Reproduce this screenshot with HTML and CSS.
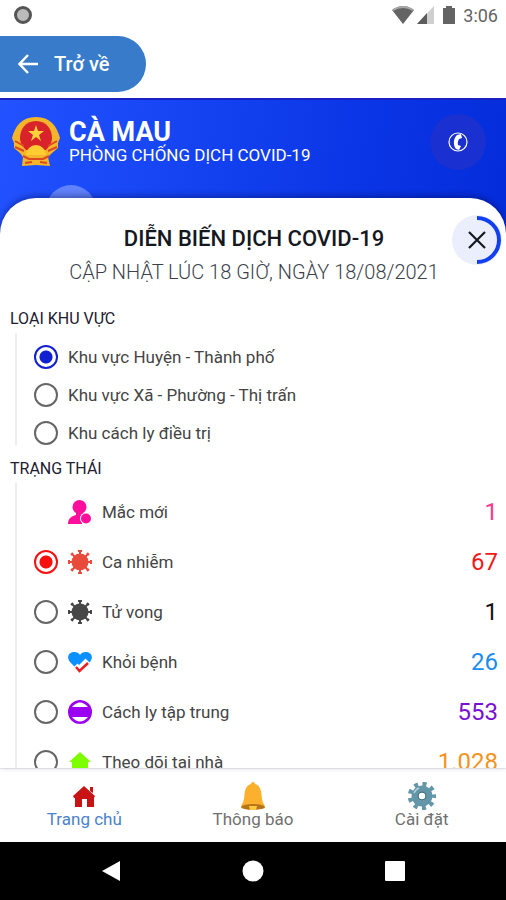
FILE: index.html
```html
<!DOCTYPE html>
<html lang="vi">
<head>
    <meta charset="UTF-8">
    <meta name="viewport" content="width=device-width, initial-scale=1.0">
    <title>Cà Mau - Phòng chống dịch COVID-19</title>
    <link rel="stylesheet" href="styles.css">
</head>
<body>
    <div class="status-bar">
        <span class="status-dot"></span>
        <div class="status-icons">
            <svg width="22" height="18" viewBox="0 0 22 18"><path d="M0 4Q11-4 22 4L11 18z" fill="#646464"/><path d="M0 4Q11-4 22 4L21 5Q11-1 1 5z" fill="#a8a8a8"/></svg>
            <svg width="17" height="18" viewBox="0 0 17 18"><path d="M17 0v18H0z" fill="#cfcfcf"/><path d="M10 7v11H0z" fill="#5c5c5c"/></svg>
            <svg class="battery" width="12" height="18" viewBox="0 0 12 18"><path d="M3 0h6v2h3v16H0V2h3z" fill="#646464"/></svg>
            <span>3:06</span>
        </div>
    </div>

    <div class="back-bar">
        <button class="back" type="button">
            <svg width="20" height="20" viewBox="0 0 20 20" fill="none" stroke="#fff" stroke-width="2.4"><path d="M20 10H2M10 1L1.500 10L10 19"/></svg>
            Trở về
        </button>
    </div>

    <main class="main">
        <header class="header">
            <svg class="emblem" width="50" height="52" viewBox="0 0 50 52">
                <path d="M25 1C11 1 4 10 1 22l2 5 0 5 6 5 3 4-1 9 14-1 14 1-2-9 4-4 6-5v-5l2-5C46 10 39 1 25 1z" fill="#f4b52a"/>
                <path d="M25 5C14 5 9 14 9 22c0 5 3 9 6 12h20c3-3 6-7 6-12C41 14 36 5 25 5z" fill="#d8232a"/>
                <path d="M25 9l2 6h6l-5 4 2 6-5-4-5 4 2-6-5-4h6z" fill="#ffd23c"/>
                <path d="M15 39a10 10 0 0 1 20 0z" fill="#ffcd32"/>
                <path d="M4 25l9 5M4 31l9 4M46 25l-9 5M46 31l-9 4M12 40l6 3h14l6-3M14 47l7-1M36 47l-7-1" stroke="#dc4a20" stroke-width="2" fill="none"/>
            </svg>
            <div class="brand">
                <h1>CÀ MAU</h1>
                <p>PHÒNG CHỐNG DỊCH COVID-19</p>
            </div>
            <button class="phone" type="button" aria-label="Gọi điện">
                <svg width="20" height="20" viewBox="0 0 20 20"><circle cx="10" cy="10" r="9" fill="none" stroke="#fff" stroke-width="1.200"/><path d="M9 3l4-1 1 4-3 1c-1 2-1.500 4-1 6l3 1-2 4-3-1C5 13 5 7 9 3z" fill="#fff"/></svg>
            </button>
        </header>
        <span class="bubble"></span>

        <section class="sheet">
            <div class="sheet-head">
                <h2>DIỄN BIẾN DỊCH COVID-19</h2>
                <p>CẬP NHẬT LÚC 18 GIỜ, NGÀY 18/08/2021</p>
                <button class="close" type="button" aria-label="Đóng">
                    <svg width="50" height="50" viewBox="0 0 50 50" fill="none">
                        <circle cx="25" cy="25" r="25" fill="#ebeffd"/>
                        <path d="M25 3a22 22 0 0 1 0 44" stroke="#1240f0" stroke-width="4"/>
                        <path d="M17 17l16 16M33 17L17 33" stroke="#16181f" stroke-width="2.200"/>
                    </svg>
                </button>
            </div>

            <h3>LOẠI KHU VỰC</h3>
            <div class="group areas">
                <label class="row"><input type="radio" name="area" checked>Khu vực Huyện - Thành phố</label>
                <label class="row"><input type="radio" name="area">Khu vực Xã - Phường - Thị trấn</label>
                <label class="row"><input type="radio" name="area">Khu cách ly điều trị</label>
            </div>

            <h3>TRẠNG THÁI</h3>
            <div class="group states">
                <div class="row new">
                    <span class="no-radio"></span>
                    <svg width="24" height="24" viewBox="0 0 24 24" fill="#ff0f9b"><circle cx="11.500" cy="7" r="7"/><path d="M8 11h7v4l-1 9H0c0-6 4-8 8-9z"/><circle cx="18" cy="18.500" r="6" fill="#fff"/><circle cx="18" cy="18.500" r="5"/></svg>
                    <span class="name">Mắc mới</span>
                    <span class="count">1</span>
                </div>
                <label class="row infected">
                    <input type="radio" name="state" checked>
                    <svg width="24" height="24" viewBox="0 0 24 24"><use href="#virus"/></svg>
                    <span class="name">Ca nhiễm</span>
                    <span class="count">67</span>
                </label>
                <label class="row dead">
                    <input type="radio" name="state">
                    <svg width="24" height="24" viewBox="0 0 24 24">
                        <g id="virus">
                            <circle cx="12" cy="12" r="8.500" fill="currentColor"/>
                            <path d="M12 5V1M12 19v4M5 12H1M19 12h4M7 7L4 4M17 7l3-3M7 17l-3 3M17 17l3 3" stroke="currentColor" stroke-width="2"/>
                            <path d="M10 1h4M10 23h4M1 10v4M23 10v4M3 5l2-2M19 3l2 2M3 19l2 2M19 21l2-2" stroke="currentColor" stroke-width="2"/>
                        </g>
                    </svg>
                    <span class="name">Tử vong</span>
                    <span class="count">1</span>
                </label>
                <label class="row cured">
                    <input type="radio" name="state">
                    <svg width="24" height="24" viewBox="0 0 24 24"><path d="M12 22L2 12C-2 7 1 2 6 2c3 0 5 1 6 3 1-2 3-3 6-3 5 0 8 5 4 10z" fill="#0c8fff"/><path d="M7 16l4 4 9-9" stroke="#fff" stroke-width="7" fill="none"/><path d="M8 17l3.500 4L20 13" stroke="#f01c24" stroke-width="2.500" fill="none"/></svg>
                    <span class="name">Khỏi bệnh</span>
                    <span class="count">26</span>
                </label>
                <label class="row isolated">
                    <input type="radio" name="state">
                    <svg width="24" height="24" viewBox="0 0 24 24"><circle cx="12" cy="12" r="12" fill="#9b00f0"/><path d="M4 7q8-9 16 0zM4 17q8 9 16 0z" fill="#fff"/></svg>
                    <span class="name">Cách ly tập trung</span>
                    <span class="count">553</span>
                </label>
                <label class="row home">
                    <input type="radio" name="state">
                    <svg width="24" height="24" viewBox="0 0 24 24"><path d="M12 2l11 10h-3v10H4V12H1z" fill="#7dff00"/></svg>
                    <span class="name">Theo dõi tại nhà</span>
                    <span class="count">1.028</span>
                </label>
            </div>
        </section>
    </main>

    <nav class="tabs">
        <a href="#" class="active">
            <svg width="28" height="28" viewBox="0 0 28 28"><path d="M5 14h19v11h-7v-8h-5v8H5z" fill="#c81414"/><path d="M14 4l11 10-1 2H4l-1-2zM20 5h3v6l-3-2z" fill="#c81414"/></svg>
            Trang chủ
        </a>
        <a href="#">
            <svg width="28" height="28" viewBox="0 0 28 28"><path d="M14 0c1.500 0 2 1 2 2 4 1 6 5 6.500 10 .5 7 1.500 9 3 11v3H2.500v-3c1.500-2 2.500-4 3-11C6 7 8 3 12 2c0-1 .5-2 2-2z" fill="#fdb02e"/><ellipse cx="14" cy="25" rx="12" ry="3" fill="#b87518"/><path d="M10 24h8l-1 4h-6z" fill="#ffca40"/></svg>
            Thông báo
        </a>
        <a href="#">
            <svg width="28" height="28" viewBox="0 0 28 28" fill="none"><circle cx="14" cy="14" r="7.500" stroke="#6396a8" stroke-width="6"/><circle cx="14" cy="14" r="12" stroke="#6396a8" stroke-width="4.500" stroke-dasharray="4 4.377" stroke-dashoffset="2"/><circle cx="14" cy="14" r="4" fill="#fff" stroke="#3f6c7c" stroke-width="1.500"/><path d="M6 11q2-4 5-5" stroke="#b5d4de" stroke-width="1.500"/></svg>
            Cài đặt
        </a>
    </nav>

    <div class="system-bar">
        <svg width="20" height="22" viewBox="0 0 20 22"><path d="M19 1v20L1 11z" fill="#fff"/></svg>
        <svg width="22" height="22" viewBox="0 0 22 22"><circle cx="11" cy="11" r="10.500" fill="#fff"/></svg>
        <svg width="20" height="20" viewBox="0 0 20 20"><rect width="20" height="20" rx="1" fill="#fff"/></svg>
    </div>
</body>
</html>
```
FILE: styles.css
```css
* {
    box-sizing: border-box;
}

body {
    display: flex;
    flex-direction: column;
    height: 100vh;
    margin: 0;
    background-color: #fff;
    color: #444;
    font-family: Roboto, sans-serif;
    font-size: 17px;
}

h1, h2, h3, p {
    margin: 0;
}

button {
    padding: 0;
    border: none;
    font-family: inherit;
    cursor: pointer;
}

svg {
    display: block;
    flex-shrink: 0;
}

/* Status bar */
.status-bar {
    display: flex;
    align-items: center;
    justify-content: space-between;
    height: 36px;
    padding: 0 8px 6px 14px;
    flex-shrink: 0;
}

.status-dot {
    width: 18px;
    height: 18px;
    border: 3px solid #555;
    border-radius: 50%;
    background-color: #bbb;
}

.status-icons {
    display: flex;
    align-items: center;
    gap: 3px;
    color: #646464;
    font-size: 18px;
}

.battery {
    margin: 0 5px 0 6px;
}

.back-bar {
    flex-shrink: 0;
    padding-bottom: 6px;
}

.back {
    display: flex;
    align-items: center;
    gap: 16px;
    height: 56px;
    padding: 0 37px 0 18px;
    border-radius: 0 28px 28px 0;
    background-color: #387bcb;
    color: #fff;
    font-size: 20px;
    font-weight: 500;
}

/* Blue area with the sheet on top */
.main {
    position: relative;
    display: flex;
    flex-direction: column;
    flex: 1;
    min-height: 0;
    border-top: 2px solid #1a20c4;
    background: linear-gradient(100deg, #2253ff, #0a35e6 60%, #0026d2);
}

.header {
    display: flex;
    align-items: center;
    height: 98px;
    padding: 0 20px 14px 11px;
    flex-shrink: 0;
    color: #fff;
}

.brand {
    flex: 1;
    margin-left: 8px;
}

.brand h1 {
    font-size: 27px;
    font-weight: 700;
    line-height: 26px;
}

.brand p {
    font-size: 17px;
    line-height: 20px;
}

.phone {
    display: flex;
    align-items: center;
    justify-content: center;
    width: 56px;
    height: 56px;
    border-radius: 50%;
    background-color: #1a30d0;
}

.bubble {
    position: absolute;
    top: 85px;
    left: 46px;
    width: 50px;
    height: 50px;
    border-radius: 50%;
    background-color: rgba(255, 255, 255, 0.3);
}

.sheet {
    position: relative;
    flex: 1;
    min-height: 0;
    overflow: hidden;
    padding: 26px 8px 0 10px;
    border-radius: 36px 36px 0 0;
    background-color: #fff;
    box-shadow: 0 -2px 6px rgba(0, 0, 60, 0.4);
}

.sheet-head {
    padding-bottom: 19px;
    text-align: center;
    color: #16181f;
}

.sheet-head h2 {
    font-size: 22px;
    font-weight: 500;
    line-height: 30px;
}

.sheet-head p {
    color: #3c3f4c;
    font-size: 20px;
    font-weight: 300;
    line-height: 36px;
}

.close {
    position: absolute;
    top: 17px;
    right: 4px;
    border-radius: 50%;
    background: none;
}

h3 {
    margin-bottom: 4px;
    color: #1c2030;
    font-size: 16px;
    font-weight: 400;
    line-height: 20px;
}

.group {
    display: flex;
    flex-direction: column;
    margin: 0 0 14px 5px;
    border-left: 2px solid #eee;
    padding-left: 17px;
}

.areas {
    gap: 14px;
    padding-top: 12px;
}

.states {
    gap: 26px;
    padding-top: 17px;
}

.row {
    display: flex;
    align-items: center;
    gap: 10px;
    height: 24px;
}

.row input {
    appearance: none;
    flex-shrink: 0;
    width: 24px;
    height: 24px;
    margin: 0;
    border: 2px solid #666;
    border-radius: 50%;
}

.row input:checked {
    border-color: #1020d0;
    background: radial-gradient(circle, #1020d0 6px, #fff 7px);
}

.infected input:checked {
    border-color: #f81010;
    background: radial-gradient(circle, #f81010 6px, #fff 7px);
}

.no-radio {
    width: 24px;
}

.name {
    flex: 1;
}

.count {
    font-size: 24px;
}

.new .count {
    color: #f83c90;
}

.infected svg {
    color: #e84a3c;
}

.infected .count {
    color: #f01818;
}

.dead svg {
    color: #484848;
}

.dead .count {
    color: #111;
}

.cured .count {
    color: #1c8cf4;
}

.isolated .count {
    color: #7a10d0;
}

.home .count {
    color: #f4921c;
}

/* Bottom navigation */
.tabs {
    display: flex;
    flex-shrink: 0;
    height: 74px;
    border-top: 1px solid #f2f2f2;
    background-color: #fff;
}

.tabs a {
    display: flex;
    flex: 1;
    flex-direction: column;
    align-items: center;
    padding-top: 13px;
    color: #707070;
    font-size: 17px;
    line-height: 18px;
    text-decoration: none;
}

.tabs .active {
    color: #4a82cc;
}

.system-bar {
    display: flex;
    align-items: center;
    justify-content: space-between;
    flex-shrink: 0;
    height: 58px;
    padding: 0 20%;
    background-color: #000;
}
```
